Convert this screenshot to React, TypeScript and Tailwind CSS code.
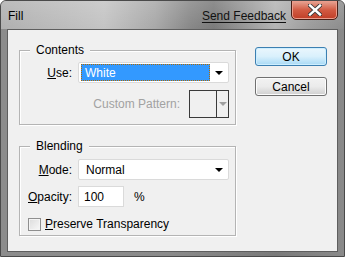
import React from 'react'

const font = { fontFamily: '"Liberation Sans", Arial, sans-serif' }

function Arrow({ gray = false }: { gray?: boolean }) {
  return (
    <span
      className={`inline-block w-0 h-0 border-l-[4px] border-r-[4px] border-t-[4px] border-l-transparent border-r-transparent ${
        gray ? 'border-t-[#a0a0a0] border-l-[3px] border-r-[3px] border-t-[3px]' : 'border-t-black'
      }`}
    />
  )
}

function GroupBox({ title, className, children }: { title: string; className: string; children: React.ReactNode }) {
  return (
    <div className={`relative border border-[#b4b4b4] shadow-[inset_1px_1px_0_#fff,1px_1px_0_#fff] ${className}`}>
      <span className="absolute left-[10px] top-[-9px] bg-[#f0f0f0] px-[6px] leading-[16px] text-[12px] text-black">
        {title}
      </span>
      {children}
    </div>
  )
}

function Combo({ value, selected = false }: { value: string; selected?: boolean }) {
  return (
    <div className="flex items-center w-[151px] h-[21px] bg-white border border-[#dadada] rounded-[2px] px-[1px]">
      {selected ? (
        <div className="flex items-center w-[131px] h-[17px] ml-[1px] bg-[#3399ff] outline-1 outline-dotted outline-[#b36a00] -outline-offset-1 text-white pl-[4px] text-[12px]">
          {value}
        </div>
      ) : (
        <div className="flex-1 pl-[6px] text-[12px] text-black">{value}</div>
      )}
      <div className="ml-auto w-[17px] flex justify-center">
        <Arrow />
      </div>
    </div>
  )
}

function Button({ label, primary = false }: { label: string; primary?: boolean }) {
  return (
    <div
      className={`flex items-center justify-center w-[72px] h-[19px] rounded-[3px] border text-[12px] text-black ${
        primary
          ? 'border-[#3c7fb1] bg-gradient-to-b from-[#eaf6fd] via-[#d9f0fc] to-[#a7d9f5] shadow-[inset_0_0_0_1px_#cdeeff]'
          : 'border-[#707070] bg-gradient-to-b from-[#f2f2f2] via-[#ebebeb] to-[#cfcfcf] shadow-[inset_0_0_0_1px_#fcfcfc]'
      }`}
    >
      {label}
    </div>
  )
}

export default function App() {
  return (
    <div
      style={font}
      className="w-[345px] h-[257px] rounded-t-[6px] border border-[#4a4a4a] bg-[linear-gradient(90deg,#8c8c8c_0%,#8a8a8a_50%,#7a7a7a_80%,#8a8a8a_100%)] flex flex-col overflow-hidden"
    >
      {/* Title bar */}
      <div className="relative flex items-start h-[28px] bg-[linear-gradient(90deg,#b0b0b0_0%,#bcbcbc_18%,#c4c4c4_30%,#a8a8a8_45%,#888888_55%,#7a7a7a_62%,#9a9a9a_72%,#b4b4b4_80%,#9c9c9c_90%,#8c8c8c_100%)]">
        <div className="absolute inset-0 bg-gradient-to-b from-white/15 to-transparent" />
        <span className="relative ml-[7px] mt-[6px] text-[12px] text-black">Fill</span>
        <span className="relative ml-auto mt-[6px] mr-[5px] text-[12px] text-[#111] underline underline-offset-[2px]">
          Send Feedback
        </span>
        <div className="relative w-[47px] h-[20px] mt-[-1px] mr-[6px] rounded-b-[5px] border border-[#4a1f16] bg-gradient-to-b from-[#e6a595] via-[#d25a42] to-[#c03d26] shadow-[inset_0_0_0_1px_#eb9d8c] flex items-center justify-center">
          <svg width="14" height="12" viewBox="0 0 14 12">
            <path d="M2 1.5 L12 10.5 M12 1.5 L2 10.5" stroke="#3a3a3a" strokeWidth="4.2" strokeLinecap="square" />
            <path d="M2 1.5 L12 10.5 M12 1.5 L2 10.5" stroke="#ffffff" strokeWidth="2.4" strokeLinecap="square" />
          </svg>
        </div>
      </div>

      {/* Client area */}
      <div className="ml-[6px] w-[331px] h-[223px] border border-[#5e5e5e] bg-[#f0f0f0] flex text-[12px] text-black">
        <div className="ml-[11px] mt-[20px] flex flex-col gap-[21px]">
          <GroupBox title="Contents" className="w-[217px] h-[75px]">
            <div className="flex items-center mt-[11px] pl-[8px]">
              <span className="w-[44px] text-right">
                <span className="underline">U</span>se:
              </span>
              <div className="ml-[6px]">
                <Combo value="White" selected />
              </div>
            </div>
            <div className="flex items-center justify-end mt-[7px] pr-[6px]">
              <span className="text-[#a2a2a2] mr-[9px]">Custom Pattern:</span>
              <div className="flex w-[40px] h-[28px] border border-[#3a3a3a]">
                <div className="w-[27px] border-r border-[#3a3a3a]" />
                <div className="flex-1 flex items-center justify-center">
                  <Arrow gray />
                </div>
              </div>
            </div>
          </GroupBox>

          <GroupBox title="Blending" className="w-[217px] h-[90px]">
            <div className="flex items-center mt-[12px] pl-[8px]">
              <span className="w-[44px] text-right">
                <span className="underline">M</span>ode:
              </span>
              <div className="ml-[6px]">
                <Combo value="Normal" />
              </div>
            </div>
            <div className="flex items-center mt-[6px] pl-[8px]">
              <span className="w-[44px] text-right">
                <span className="underline">O</span>pacity:
              </span>
              <div className="ml-[6px] flex items-center w-[46px] h-[21px] bg-white border border-[#dadada] pl-[5px]">
                100
              </div>
              <span className="ml-[10px]">%</span>
            </div>
            <div className="flex items-center mt-[8px] pl-[8px]">
              <div className="w-[13px] h-[13px] border border-[#8f8f8f] bg-gradient-to-br from-[#dcdcdc] to-[#f8f8f8] shadow-[inset_0_0_0_1px_#f4f4f4]" />
              <span className="ml-[4px]">
                <span className="underline">P</span>reserve Transparency
              </span>
            </div>
          </GroupBox>
        </div>

        <div className="ml-[19px] mt-[17px] flex flex-col gap-[11px]">
          <Button label="OK" primary />
          <Button label="Cancel" />
        </div>
      </div>
    </div>
  )
}
